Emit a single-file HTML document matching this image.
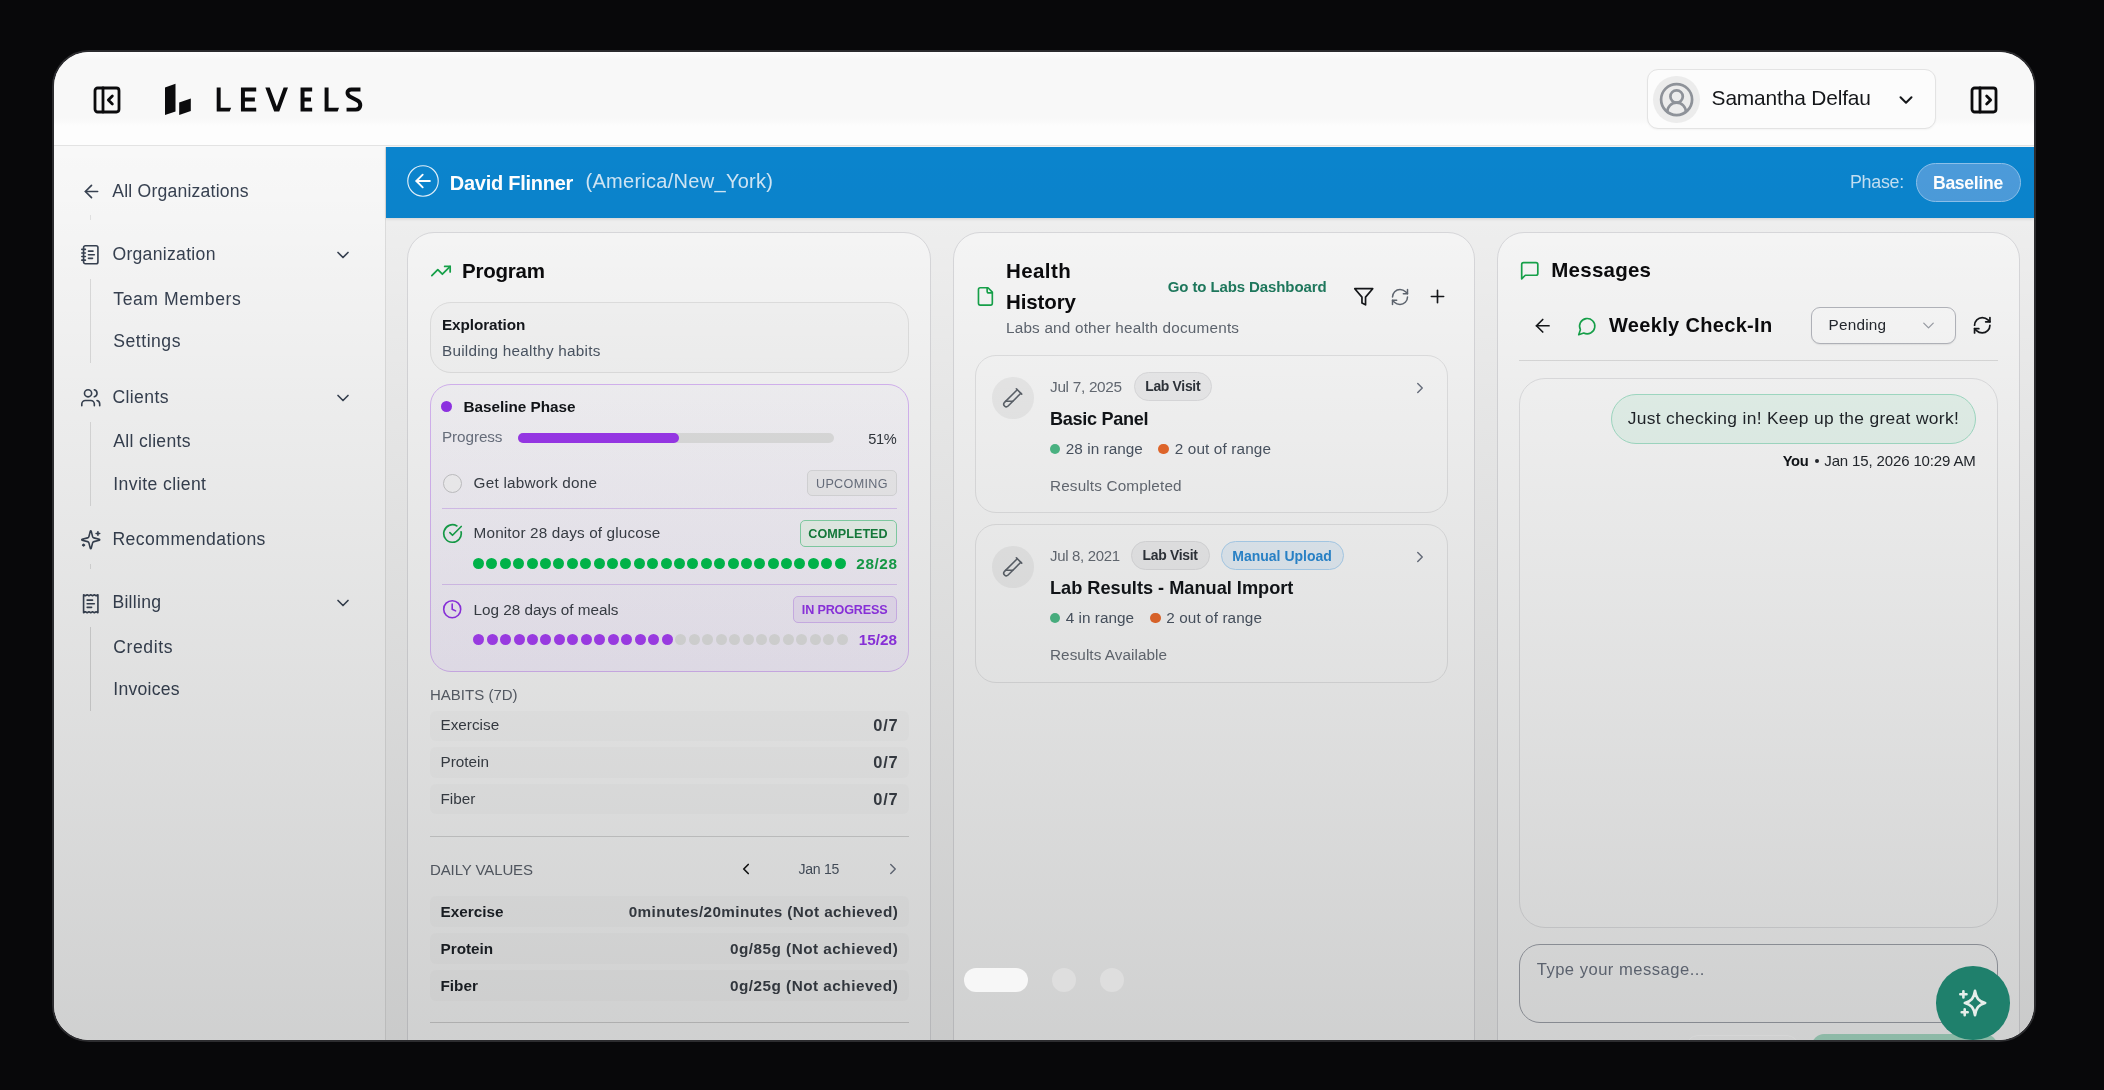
<!DOCTYPE html>
<html><head><meta charset="utf-8"><title>Levels</title>
<style>
html,body{margin:0;padding:0;}
body{width:2104px;height:1090px;overflow:hidden;background:#08080a;font-family:"Liberation Sans",sans-serif;position:relative;}
#win{position:absolute;left:52px;top:50px;width:1980px;height:988px;border:2px solid #2c2c2f;border-radius:37px;overflow:hidden;background:#f8f8f8;}
#in{position:absolute;left:-54px;top:-52px;width:2104px;height:1090px;will-change:transform;}
#in div,#in span,#in svg,#in i{position:absolute;box-sizing:border-box;}
#in i{width:11px;height:11px;border-radius:50%;display:block;}
#ov{left:54px;top:147px;width:1980px;height:893px;background:linear-gradient(rgba(0,0,0,0),rgba(4,8,8,0.165));pointer-events:none;}
</style></head><body>
<div id="win"><div id="in">
<div style="left:54px;top:52px;width:1980px;height:94px;background:linear-gradient(#ffffff 0px,#f8f8f8 8px,#f8f8f8 66px,#fdfdfd 74px,#fdfdfd 100%);border-bottom:1px solid #e3e3e3;"></div>
<svg style="left:90.7px;top:83.6px;" width="32" height="32" viewBox="0 0 24 24" fill="none" stroke="#0b0b0d" stroke-width="2.1" stroke-linecap="round" stroke-linejoin="round"><rect width="18" height="18" x="3" y="3" rx="2"/><path d="M9 3v18"/><path d="m16 15-3-3 3-3"/></svg>
<svg style="left:164px;top:83px" width="28" height="33" viewBox="0 0 28 33"><path d="M1 4.5 L11.5 0.8 L11.5 28.5 L1 32 Z" fill="#0b0b0d"/><path d="M15.2 19.5 L26.8 15.5 L26.8 28 L15.2 32 Z" fill="#0b0b0d"/></svg>
<svg style="left:155px;top:75px" width="220" height="50" viewBox="0 0 2104 478" fill="none" stroke="#0b0b0d" stroke-width="38" stroke-linejoin="miter"><path d="M590 120H628V312H728L714 350H590Z" fill="#0b0b0d" stroke="none"/><path d="M968 139H841V331H968M841 234H955"/><path d="M1055 120H1097L1165 300L1230 120H1272L1188 350H1140Z" fill="#0b0b0d" stroke="none"/><path d="M1503 139H1411V331H1503M1411 234H1492"/><path d="M1622 120H1660V312H1760L1746 350H1622Z" fill="#0b0b0d" stroke="none"/><path d="M1965 139H1878Q1840 139 1841 172Q1842 198 1876 213L1936 243Q1966 259 1963 293Q1959 331 1920 331H1832" stroke-linejoin="round"/></svg>
<div style="left:1647px;top:68.8px;width:289px;height:60.4px;background:#fcfcfc;border:1px solid #e3e3e3;border-radius:11px;box-shadow:0 1px 2px rgba(0,0,0,.04);"></div>
<div style="left:1653.3px;top:76px;width:46.8px;height:46.8px;background:#ececec;border-radius:50%;"></div>
<svg style="left:1658.1px;top:80.8px;" width="37.2" height="37.2" viewBox="0 0 24 24" fill="none" stroke="#8e9299" stroke-width="1.75" stroke-linecap="round" stroke-linejoin="round"><path d="M18 20a6 6 0 0 0-12 0"/><circle cx="12" cy="10" r="4"/><circle cx="12" cy="12" r="10"/></svg>
<span style="top:85.16px;font-size:20.90px;line-height:26px;color:#15171a;font-weight:400;white-space:nowrap;letter-spacing:-0.150px;left:1711.60px;">Samantha Delfau</span>
<svg style="left:1894.9px;top:88.6px;" width="22" height="22" viewBox="0 0 24 24" fill="none" stroke="#15171a" stroke-width="2.2" stroke-linecap="round" stroke-linejoin="round"><path d="m6 9 6 6 6-6"/></svg>
<svg style="left:1967.8px;top:84px;" width="32" height="32" viewBox="0 0 24 24" fill="none" stroke="#0b0b0d" stroke-width="2.1" stroke-linecap="round" stroke-linejoin="round"><rect width="18" height="18" x="3" y="3" rx="2"/><path d="M9 3v18"/><path d="m14 9 3 3-3 3"/></svg>
<div style="left:54px;top:147px;width:332px;height:893px;background:#f8f8f8;border-right:1px solid #dedede;"></div>
<svg style="left:80.7px;top:181.2px;" width="21" height="21" viewBox="0 0 24 24" fill="none" stroke="#374151" stroke-width="1.9" stroke-linecap="round" stroke-linejoin="round"><path d="m12 19-7-7 7-7"/><path d="M19 12H5"/></svg>
<span style="top:179.70px;font-size:17.60px;line-height:22px;color:#374151;font-weight:400;white-space:nowrap;letter-spacing:0.216px;left:112.20px;">All Organizations</span>
<div style="left:90px;top:215px;width:1px;height:5px;background:#e2e2e2;"></div>
<svg style="left:80.05px;top:244.45px;" width="21.5" height="21.5" viewBox="0 0 24 24" fill="none" stroke="#374151" stroke-width="1.8" stroke-linecap="round" stroke-linejoin="round"><path d="M2 6h4"/><path d="M2 10h4"/><path d="M2 14h4"/><path d="M2 18h4"/><rect width="16" height="20" x="4" y="2" rx="2"/><path d="M9.5 8h5"/><path d="M9.5 12H16"/><path d="M9.5 16H14"/></svg>
<span style="top:242.90px;font-size:17.60px;line-height:22px;color:#374151;font-weight:400;white-space:nowrap;letter-spacing:0.300px;left:112.40px;">Organization</span>
<svg style="left:333px;top:244.8px;" width="20" height="20" viewBox="0 0 24 24" fill="none" stroke="#374151" stroke-width="2" stroke-linecap="round" stroke-linejoin="round"><path d="m6 9 6 6 6-6"/></svg>
<div style="left:90px;top:279px;width:1px;height:84px;background:#dcdcdc;"></div>
<span style="top:287.90px;font-size:17.60px;line-height:22px;color:#374151;font-weight:400;white-space:nowrap;letter-spacing:0.565px;left:113.30px;">Team Members</span>
<span style="top:329.90px;font-size:17.60px;line-height:22px;color:#374151;font-weight:400;white-space:nowrap;letter-spacing:0.514px;left:113.30px;">Settings</span>
<svg style="left:80.25px;top:386.75px;" width="21.5" height="21.5" viewBox="0 0 24 24" fill="none" stroke="#374151" stroke-width="1.8" stroke-linecap="round" stroke-linejoin="round"><path d="M16 21v-2a4 4 0 0 0-4-4H6a4 4 0 0 0-4 4v2"/><circle cx="9" cy="7" r="4"/><path d="M22 21v-2a4 4 0 0 0-3-3.87"/><path d="M16 3.13a4 4 0 0 1 0 7.75"/></svg>
<span style="top:385.50px;font-size:17.60px;line-height:22px;color:#374151;font-weight:400;white-space:nowrap;letter-spacing:0.384px;left:112.40px;">Clients</span>
<svg style="left:333px;top:387.5px;" width="20" height="20" viewBox="0 0 24 24" fill="none" stroke="#374151" stroke-width="2" stroke-linecap="round" stroke-linejoin="round"><path d="m6 9 6 6 6-6"/></svg>
<div style="left:90px;top:421.5px;width:1px;height:84px;background:#dcdcdc;"></div>
<span style="top:430.40px;font-size:17.60px;line-height:22px;color:#374151;font-weight:400;white-space:nowrap;letter-spacing:0.286px;left:113.30px;">All clients</span>
<span style="top:472.50px;font-size:17.60px;line-height:22px;color:#374151;font-weight:400;white-space:nowrap;letter-spacing:0.387px;left:113.30px;">Invite client</span>
<svg style="left:80.25px;top:529.25px;" width="21.5" height="21.5" viewBox="0 0 24 24" fill="none" stroke="#374151" stroke-width="1.8" stroke-linecap="round" stroke-linejoin="round"><path d="M9.937 15.5A2 2 0 0 0 8.5 14.063l-6.135-1.582a.5.5 0 0 1 0-.962L8.5 9.936A2 2 0 0 0 9.937 8.5l1.582-6.135a.5.5 0 0 1 .963 0L14.063 8.5A2 2 0 0 0 15.5 9.937l6.135 1.581a.5.5 0 0 1 0 .964L15.5 14.063a2 2 0 0 0-1.437 1.437l-1.582 6.135a.5.5 0 0 1-.963 0z"/><path d="M20 3v4"/><path d="M22 5h-4"/><path d="M4 17v2"/><path d="M5 18H3"/></svg>
<span style="top:527.90px;font-size:17.60px;line-height:22px;color:#374151;font-weight:400;white-space:nowrap;letter-spacing:0.453px;left:112.40px;">Recommendations</span>
<div style="left:90px;top:564px;width:1px;height:5px;background:#dcdcdc;"></div>
<svg style="left:80.25px;top:592.75px;" width="21.5" height="21.5" viewBox="0 0 24 24" fill="none" stroke="#374151" stroke-width="1.8" stroke-linecap="round" stroke-linejoin="round"><path d="M4 2v20l2-1 2 1 2-1 2 1 2-1 2 1 2-1 2 1V2l-2 1-2-1-2 1-2-1-2 1-2-1-2 1Z"/><path d="M14 8H8"/><path d="M16 12H8"/><path d="M13 16H8"/></svg>
<span style="top:591.40px;font-size:17.60px;line-height:22px;color:#374151;font-weight:400;white-space:nowrap;letter-spacing:0.274px;left:112.40px;">Billing</span>
<svg style="left:333px;top:593px;" width="20" height="20" viewBox="0 0 24 24" fill="none" stroke="#374151" stroke-width="2" stroke-linecap="round" stroke-linejoin="round"><path d="m6 9 6 6 6-6"/></svg>
<div style="left:90px;top:627px;width:1px;height:84px;background:#d6d6d6;"></div>
<span style="top:635.90px;font-size:17.60px;line-height:22px;color:#374151;font-weight:400;white-space:nowrap;letter-spacing:0.575px;left:113.30px;">Credits</span>
<span style="top:678.10px;font-size:17.60px;line-height:22px;color:#374151;font-weight:400;white-space:nowrap;letter-spacing:0.233px;left:113.30px;">Invoices</span>
<div style="left:386px;top:147px;width:1648px;height:893px;background:#f1f1f1;"></div>
<div style="left:386px;top:147px;width:1648px;height:71px;background:#0b84cd;box-shadow:0 1px 3px rgba(0,0,0,.12);"></div>
<svg style="left:404.9px;top:162.8px;" width="36" height="36" viewBox="0 0 24 24" fill="none" stroke="#ffffff" stroke-width="1.25" stroke-linecap="round" stroke-linejoin="round"><circle cx="12" cy="12" r="10.15" stroke-width=".75" stroke="#e4f1fa"/><path d="M16.6 12H7.6"/><path d="m11.8 7.8-4.2 4.2 4.2 4.2"/></svg>
<span style="top:171.07px;font-size:20.00px;line-height:25px;color:#ffffff;font-weight:700;white-space:nowrap;letter-spacing:-0.260px;left:449.80px;">David Flinner</span>
<span style="top:169.07px;font-size:20.00px;line-height:25px;color:#cfe5f4;font-weight:400;white-space:nowrap;letter-spacing:0.284px;left:585.50px;">(America/New_York)</span>
<span style="top:171.20px;font-size:17.89px;line-height:22px;color:#c3dff2;font-weight:400;white-space:nowrap;letter-spacing:-0.300px;left:1850.00px;">Phase:</span>
<div style="left:1915.5px;top:163px;width:105px;height:39px;background:#4c9bda;border:1px solid #8cc0ea;border-radius:20px;"></div>
<span style="top:171.91px;font-size:17.58px;line-height:22px;color:#ffffff;font-weight:700;white-space:nowrap;letter-spacing:-0.301px;left:1933.00px;">Baseline</span>
<div style="left:407.3px;top:231.8px;width:523.3px;height:848.2px;background:#f8f8f8;border:1px solid #d9d9dc;border-radius:27px;"></div>
<svg style="left:429.6px;top:259.7px;" width="22" height="22" viewBox="0 0 24 24" fill="none" stroke="#16a34a" stroke-width="1.9" stroke-linecap="round" stroke-linejoin="round"><polyline points="22 7 13.5 15.5 8.5 10.5 2 17"/><polyline points="16 7 22 7 22 13"/></svg>
<span style="top:257.80px;font-size:20.50px;line-height:26px;color:#0b0b0d;font-weight:700;white-space:nowrap;letter-spacing:-0.217px;left:462.00px;">Program</span>
<div style="left:430px;top:302px;width:479px;height:71px;background:#f5f5f5;border:1px solid #e1e1e1;border-radius:21px;"></div>
<span style="top:315.40px;font-size:15.30px;line-height:19px;color:#14171c;font-weight:700;white-space:nowrap;letter-spacing:-0.086px;left:442.00px;">Exploration</span>
<span style="top:340.70px;font-size:15.30px;line-height:19px;color:#4b5563;font-weight:400;white-space:nowrap;letter-spacing:0.237px;left:442.00px;">Building healthy habits</span>
<div style="left:430px;top:384px;width:479px;height:287.5px;background:linear-gradient(#f6f5f8,#f4effb);border:1px solid #d8b6f5;border-radius:21px;"></div>
<div style="left:441.3px;top:401.3px;width:11px;height:11px;background:#9333ea;border-radius:50%;"></div>
<span style="top:397.20px;font-size:15.30px;line-height:19px;color:#111418;font-weight:700;white-space:nowrap;letter-spacing:-0.012px;left:463.40px;">Baseline Phase</span>
<span style="top:427.00px;font-size:15.30px;line-height:19px;color:#6b7280;font-weight:400;white-space:nowrap;letter-spacing:-0.103px;left:442.00px;">Progress</span>
<div style="left:518px;top:433px;width:316px;height:10px;background:#e0e0e0;border-radius:5px;"></div>
<div style="left:518px;top:433px;width:161px;height:10px;background:#9c38ee;border-radius:5px;"></div>
<span style="top:429.64px;font-size:14.60px;line-height:18px;color:#30353c;font-weight:400;white-space:nowrap;letter-spacing:-0.400px;right:1207.70px;">51%</span>
<div style="left:443.3px;top:474.1px;width:19.2px;height:19.2px;border:1.8px solid #c6c6c8;border-radius:50%;box-sizing:border-box;background:#f6f5f7;"></div>
<span style="top:473.00px;font-size:15.30px;line-height:19px;color:#3a3f47;font-weight:400;white-space:nowrap;letter-spacing:0.232px;left:473.60px;">Get labwork done</span>
<div style="left:807px;top:470px;width:90.2px;height:26.3px;background:#efeef0;border:1.5px solid #dcdcde;border-radius:5px;"></div>
<span style="top:475.63px;font-size:12.60px;line-height:16px;color:#6b7280;font-weight:400;white-space:nowrap;letter-spacing:0.314px;left:816.00px;">UPCOMING</span>
<div style="left:442px;top:508px;width:455px;height:1px;background:#dcc4f3;"></div>
<svg style="left:441.8px;top:522.5px;" width="21" height="21" viewBox="0 0 24 24" fill="none" stroke="#16a34a" stroke-width="1.9" stroke-linecap="round" stroke-linejoin="round"><path d="M21.801 10A10 10 0 1 1 17 3.335"/><path d="m9 11 3 3L22 4"/></svg>
<span style="top:522.90px;font-size:15.30px;line-height:19px;color:#3a3f47;font-weight:400;white-space:nowrap;letter-spacing:0.154px;left:473.60px;">Monitor 28 days of glucose</span>
<div style="left:799.5px;top:520px;width:97.7px;height:26.8px;background:#edf5ef;border:1.5px solid #86d6aa;border-radius:5px;"></div>
<span style="top:525.63px;font-size:12.60px;line-height:16px;color:#15803d;font-weight:700;white-space:nowrap;letter-spacing:0.037px;left:808.30px;">COMPLETED</span>
<i style="left:473.10px;top:557.90px;background:#00c04e"></i><i style="left:486.49px;top:557.90px;background:#00c04e"></i><i style="left:499.88px;top:557.90px;background:#00c04e"></i><i style="left:513.27px;top:557.90px;background:#00c04e"></i><i style="left:526.66px;top:557.90px;background:#00c04e"></i><i style="left:540.05px;top:557.90px;background:#00c04e"></i><i style="left:553.44px;top:557.90px;background:#00c04e"></i><i style="left:566.83px;top:557.90px;background:#00c04e"></i><i style="left:580.22px;top:557.90px;background:#00c04e"></i><i style="left:593.61px;top:557.90px;background:#00c04e"></i><i style="left:607.00px;top:557.90px;background:#00c04e"></i><i style="left:620.39px;top:557.90px;background:#00c04e"></i><i style="left:633.78px;top:557.90px;background:#00c04e"></i><i style="left:647.17px;top:557.90px;background:#00c04e"></i><i style="left:660.56px;top:557.90px;background:#00c04e"></i><i style="left:673.95px;top:557.90px;background:#00c04e"></i><i style="left:687.34px;top:557.90px;background:#00c04e"></i><i style="left:700.73px;top:557.90px;background:#00c04e"></i><i style="left:714.12px;top:557.90px;background:#00c04e"></i><i style="left:727.51px;top:557.90px;background:#00c04e"></i><i style="left:740.90px;top:557.90px;background:#00c04e"></i><i style="left:754.29px;top:557.90px;background:#00c04e"></i><i style="left:767.68px;top:557.90px;background:#00c04e"></i><i style="left:781.07px;top:557.90px;background:#00c04e"></i><i style="left:794.46px;top:557.90px;background:#00c04e"></i><i style="left:807.85px;top:557.90px;background:#00c04e"></i><i style="left:821.24px;top:557.90px;background:#00c04e"></i><i style="left:834.63px;top:557.90px;background:#00c04e"></i>
<span style="top:554.10px;font-size:15.30px;line-height:19px;color:#16a34a;font-weight:700;white-space:nowrap;letter-spacing:0.604px;right:1206.40px;">28/28</span>
<div style="left:442px;top:584.3px;width:455px;height:1px;background:#dcc4f3;"></div>
<svg style="left:442.1px;top:599.4px;" width="20.4" height="20.4" viewBox="0 0 24 24" fill="none" stroke="#9333ea" stroke-width="1.9" stroke-linecap="round" stroke-linejoin="round"><circle cx="12" cy="12" r="10"/><polyline points="12 6 12 12 16 14"/></svg>
<span style="top:599.50px;font-size:15.30px;line-height:19px;color:#3a3f47;font-weight:400;white-space:nowrap;letter-spacing:-0.028px;left:473.60px;">Log 28 days of meals</span>
<div style="left:792.8px;top:596.4px;width:104.4px;height:27px;background:#ede3f7;border:1.5px solid #d6b8f3;border-radius:5px;"></div>
<span style="top:602.23px;font-size:12.60px;line-height:16px;color:#9333ea;font-weight:700;white-space:nowrap;letter-spacing:-0.161px;left:801.80px;">IN PROGRESS</span>
<i style="left:473.10px;top:634.20px;background:#a73ff5"></i><i style="left:486.57px;top:634.20px;background:#a73ff5"></i><i style="left:500.04px;top:634.20px;background:#a73ff5"></i><i style="left:513.51px;top:634.20px;background:#a73ff5"></i><i style="left:526.98px;top:634.20px;background:#a73ff5"></i><i style="left:540.45px;top:634.20px;background:#a73ff5"></i><i style="left:553.92px;top:634.20px;background:#a73ff5"></i><i style="left:567.39px;top:634.20px;background:#a73ff5"></i><i style="left:580.86px;top:634.20px;background:#a73ff5"></i><i style="left:594.33px;top:634.20px;background:#a73ff5"></i><i style="left:607.80px;top:634.20px;background:#a73ff5"></i><i style="left:621.27px;top:634.20px;background:#a73ff5"></i><i style="left:634.74px;top:634.20px;background:#a73ff5"></i><i style="left:648.21px;top:634.20px;background:#a73ff5"></i><i style="left:661.68px;top:634.20px;background:#a73ff5"></i><i style="left:675.15px;top:634.20px;background:#e0e0e0"></i><i style="left:688.62px;top:634.20px;background:#e0e0e0"></i><i style="left:702.09px;top:634.20px;background:#e0e0e0"></i><i style="left:715.56px;top:634.20px;background:#e0e0e0"></i><i style="left:729.03px;top:634.20px;background:#e0e0e0"></i><i style="left:742.50px;top:634.20px;background:#e0e0e0"></i><i style="left:755.97px;top:634.20px;background:#e0e0e0"></i><i style="left:769.44px;top:634.20px;background:#e0e0e0"></i><i style="left:782.91px;top:634.20px;background:#e0e0e0"></i><i style="left:796.38px;top:634.20px;background:#e0e0e0"></i><i style="left:809.85px;top:634.20px;background:#e0e0e0"></i><i style="left:823.32px;top:634.20px;background:#e0e0e0"></i><i style="left:836.79px;top:634.20px;background:#e0e0e0"></i>
<span style="top:630.20px;font-size:15.30px;line-height:19px;color:#9333ea;font-weight:700;white-space:nowrap;letter-spacing:0.004px;right:1207.00px;">15/28</span>
<span style="top:685.00px;font-size:15.00px;line-height:19px;color:#5b616b;font-weight:400;white-space:nowrap;letter-spacing:0.009px;left:430.00px;">HABITS (7D)</span>
<div style="left:430px;top:710.7px;width:479px;height:30.5px;background:#f4f4f4;border-radius:6px;"></div>
<span style="top:715.20px;font-size:15.30px;line-height:19px;color:#3a3f47;font-weight:400;white-space:nowrap;left:440.50px;">Exercise</span>
<span style="top:714.99px;font-size:16.47px;line-height:21px;color:#3a3f47;font-weight:700;white-space:nowrap;letter-spacing:0.750px;right:1205.55px;">0/7</span>
<div style="left:430px;top:747.3px;width:479px;height:30.5px;background:#f4f4f4;border-radius:6px;"></div>
<span style="top:752.40px;font-size:15.30px;line-height:19px;color:#3a3f47;font-weight:400;white-space:nowrap;left:440.50px;">Protein</span>
<span style="top:752.19px;font-size:16.47px;line-height:21px;color:#3a3f47;font-weight:700;white-space:nowrap;letter-spacing:0.750px;right:1205.55px;">0/7</span>
<div style="left:430px;top:783.9px;width:479px;height:30.5px;background:#f4f4f4;border-radius:6px;"></div>
<span style="top:789.20px;font-size:15.30px;line-height:19px;color:#3a3f47;font-weight:400;white-space:nowrap;left:440.50px;">Fiber</span>
<span style="top:788.99px;font-size:16.47px;line-height:21px;color:#3a3f47;font-weight:700;white-space:nowrap;letter-spacing:0.750px;right:1205.55px;">0/7</span>
<div style="left:430px;top:836px;width:479px;height:1px;background:#d4d4d4;"></div>
<span style="top:860.10px;font-size:15.00px;line-height:19px;color:#5b616b;font-weight:400;white-space:nowrap;letter-spacing:-0.110px;left:430.00px;">DAILY VALUES</span>
<svg style="left:736.8px;top:860px;" width="18" height="18" viewBox="0 0 24 24" fill="none" stroke="#111" stroke-width="2.2" stroke-linecap="round" stroke-linejoin="round"><path d="m15 18-6-6 6-6"/></svg>
<span style="top:860.12px;font-size:14.09px;line-height:18px;color:#4b5563;font-weight:400;white-space:nowrap;letter-spacing:-0.300px;left:798.60px;">Jan 15</span>
<svg style="left:883.8px;top:860px;" width="18" height="18" viewBox="0 0 24 24" fill="none" stroke="#6b7280" stroke-width="1.9" stroke-linecap="round" stroke-linejoin="round"><path d="m9 18 6-6-6-6"/></svg>
<div style="left:430px;top:896px;width:479px;height:31px;background:#f4f4f4;border-radius:6px;"></div>
<span style="top:901.90px;font-size:15.30px;line-height:19px;color:#1c2026;font-weight:700;white-space:nowrap;left:440.50px;">Exercise</span>
<span style="top:901.90px;font-size:15.30px;line-height:19px;color:#3a3f47;font-weight:700;white-space:nowrap;letter-spacing:0.388px;right:1205.81px;">0minutes/20minutes (Not achieved)</span>
<div style="left:430px;top:933.1px;width:479px;height:31px;background:#f4f4f4;border-radius:6px;"></div>
<span style="top:939.20px;font-size:15.30px;line-height:19px;color:#1c2026;font-weight:700;white-space:nowrap;left:440.50px;">Protein</span>
<span style="top:939.20px;font-size:15.30px;line-height:19px;color:#3a3f47;font-weight:700;white-space:nowrap;letter-spacing:0.483px;right:1205.72px;">0g/85g (Not achieved)</span>
<div style="left:430px;top:970.2px;width:479px;height:31px;background:#f4f4f4;border-radius:6px;"></div>
<span style="top:976.20px;font-size:15.30px;line-height:19px;color:#1c2026;font-weight:700;white-space:nowrap;left:440.50px;">Fiber</span>
<span style="top:976.20px;font-size:15.30px;line-height:19px;color:#3a3f47;font-weight:700;white-space:nowrap;letter-spacing:0.483px;right:1205.72px;">0g/25g (Not achieved)</span>
<div style="left:430px;top:1022.3px;width:479px;height:1px;background:#cfcfcf;"></div>
<div style="left:952.8px;top:231.8px;width:522.6px;height:848.2px;background:#f8f8f8;border:1px solid #d9d9dc;border-radius:27px;"></div>
<svg style="left:974.8px;top:286.4px;" width="20.8" height="20.8" viewBox="0 0 24 24" fill="none" stroke="#16a34a" stroke-width="1.9" stroke-linecap="round" stroke-linejoin="round"><path d="M15 2H6a2 2 0 0 0-2 2v16a2 2 0 0 0 2 2h12a2 2 0 0 0 2-2V7Z"/><path d="M14 2v4a2 2 0 0 0 2 2h4"/></svg>
<span style="top:257.70px;font-size:20.50px;line-height:26px;color:#0b0b0d;font-weight:700;white-space:nowrap;letter-spacing:0.409px;left:1006.00px;">Health</span>
<span style="top:289.30px;font-size:20.50px;line-height:26px;color:#0b0b0d;font-weight:700;white-space:nowrap;letter-spacing:-0.105px;left:1006.00px;">History</span>
<span style="top:318.00px;font-size:15.30px;line-height:19px;color:#5f6670;font-weight:400;white-space:nowrap;letter-spacing:0.197px;left:1006.00px;">Labs and other health documents</span>
<span style="top:277.30px;font-size:15.00px;line-height:19px;color:#1f7a5e;font-weight:700;white-space:nowrap;letter-spacing:-0.109px;left:1167.80px;">Go to Labs Dashboard</span>
<svg style="left:1352.95px;top:286.05px;" width="21.5" height="21.5" viewBox="0 0 24 24" fill="none" stroke="#15171a" stroke-width="1.9" stroke-linecap="round" stroke-linejoin="round"><polygon points="22 3 2 3 10 12.46 10 19 14 21 14 12.46 22 3"/></svg>
<svg style="left:1390.4px;top:286.6px;" width="20" height="20" viewBox="0 0 24 24" fill="none" stroke="#5f6670" stroke-width="1.8" stroke-linecap="round" stroke-linejoin="round"><path d="M3 12a9 9 0 0 1 9-9 9.75 9.75 0 0 1 6.74 2.74L21 8"/><path d="M21 3v5h-5"/><path d="M21 12a9 9 0 0 1-9 9 9.75 9.75 0 0 1-6.74-2.74L3 16"/><path d="M8 16H3v5"/></svg>
<svg style="left:1426.7px;top:286.1px;" width="21" height="21" viewBox="0 0 24 24" fill="none" stroke="#15171a" stroke-width="1.9" stroke-linecap="round" stroke-linejoin="round"><path d="M5 12h14"/><path d="M12 5v14"/></svg>
<div style="left:975.2px;top:355px;width:472.5px;height:158px;background:#f9f9f9;border:1px solid #e2e2e3;border-radius:21px;"></div>
<div style="left:992.2px;top:377.3px;width:41.4px;height:41.4px;background:#ececec;border-radius:50%;"></div>
<svg style="left:1002.45px;top:387.05px;" width="21.5" height="21.5" viewBox="0 0 24 24" fill="none" stroke="#5d636b" stroke-width="1.75" stroke-linecap="round" stroke-linejoin="round"><path d="M21 7 6.82 21.18a2.83 2.83 0 0 1-3.99-.01a2.83 2.83 0 0 1 0-4L17 3"/><path d="m16 2 6 6"/><path d="M12 16H4"/></svg>
<span style="top:376.97px;font-size:15.37px;line-height:19px;color:#666c75;font-weight:400;white-space:nowrap;letter-spacing:-0.300px;left:1050.00px;">Jul 7, 2025</span>
<div style="left:1134px;top:372px;width:78.4px;height:28.6px;background:#ededee;border:1px solid #dedee0;border-radius:15px;"></div>
<span style="top:378.47px;font-size:13.93px;line-height:17px;color:#2f343b;font-weight:700;white-space:nowrap;letter-spacing:-0.300px;left:1145.20px;">Lab Visit</span>
<svg style="left:1411.2px;top:378.6px;" width="18" height="18" viewBox="0 0 24 24" fill="none" stroke="#6b7280" stroke-width="1.9" stroke-linecap="round" stroke-linejoin="round"><path d="m9 18 6-6-6-6"/></svg>
<span style="top:408.43px;font-size:18.10px;line-height:23px;color:#111418;font-weight:700;white-space:nowrap;letter-spacing:-0.301px;left:1050.00px;">Basic Panel</span>
<div style="left:1049.8px;top:443.5px;width:10.6px;height:10.6px;background:#4dbb88;border-radius:50%;"></div>
<span style="top:438.90px;font-size:15.30px;line-height:19px;color:#4b5563;font-weight:400;white-space:nowrap;letter-spacing:0.045px;left:1065.80px;">28 in range</span>
<div style="left:1158.4px;top:443.5px;width:10.6px;height:10.6px;background:#ea6a2c;border-radius:50%;"></div>
<span style="top:438.90px;font-size:15.30px;line-height:19px;color:#4b5563;font-weight:400;white-space:nowrap;letter-spacing:0.144px;left:1174.70px;">2 out of range</span>
<span style="top:475.90px;font-size:15.30px;line-height:19px;color:#666c75;font-weight:400;white-space:nowrap;letter-spacing:0.147px;left:1050.00px;">Results Completed</span>
<div style="left:975.2px;top:524px;width:472.5px;height:159px;background:#f9f9f9;border:1px solid #e2e2e3;border-radius:21px;"></div>
<div style="left:992.2px;top:546.3px;width:41.4px;height:41.4px;background:#ececec;border-radius:50%;"></div>
<svg style="left:1002.45px;top:556.05px;" width="21.5" height="21.5" viewBox="0 0 24 24" fill="none" stroke="#5d636b" stroke-width="1.75" stroke-linecap="round" stroke-linejoin="round"><path d="M21 7 6.82 21.18a2.83 2.83 0 0 1-3.99-.01a2.83 2.83 0 0 1 0-4L17 3"/><path d="m16 2 6 6"/><path d="M12 16H4"/></svg>
<span style="top:546.12px;font-size:14.96px;line-height:19px;color:#666c75;font-weight:400;white-space:nowrap;letter-spacing:-0.301px;left:1050.00px;">Jul 8, 2021</span>
<div style="left:1131.3px;top:541px;width:78.4px;height:28.6px;background:#ededee;border:1px solid #dedee0;border-radius:15px;"></div>
<span style="top:547.47px;font-size:13.93px;line-height:17px;color:#2f343b;font-weight:700;white-space:nowrap;letter-spacing:-0.300px;left:1142.50px;">Lab Visit</span>
<div style="left:1220.7px;top:541px;width:123px;height:28.6px;background:#e6eff7;border:1px solid #aed4f2;border-radius:15px;"></div>
<span style="top:546.95px;font-size:14.00px;line-height:18px;color:#2b8ad4;font-weight:700;white-space:nowrap;letter-spacing:-0.005px;left:1232.30px;">Manual Upload</span>
<svg style="left:1411.2px;top:547.6px;" width="18" height="18" viewBox="0 0 24 24" fill="none" stroke="#6b7280" stroke-width="1.9" stroke-linecap="round" stroke-linejoin="round"><path d="m9 18 6-6-6-6"/></svg>
<span style="top:577.39px;font-size:18.20px;line-height:23px;color:#111418;font-weight:700;white-space:nowrap;letter-spacing:-0.004px;left:1050.00px;">Lab Results - Manual Import</span>
<div style="left:1049.8px;top:612.5px;width:10.6px;height:10.6px;background:#4dbb88;border-radius:50%;"></div>
<span style="top:607.90px;font-size:15.30px;line-height:19px;color:#4b5563;font-weight:400;white-space:nowrap;letter-spacing:0.017px;left:1065.80px;">4 in range</span>
<div style="left:1150.2px;top:612.5px;width:10.6px;height:10.6px;background:#ea6a2c;border-radius:50%;"></div>
<span style="top:607.90px;font-size:15.30px;line-height:19px;color:#4b5563;font-weight:400;white-space:nowrap;letter-spacing:0.106px;left:1166.20px;">2 out of range</span>
<span style="top:644.90px;font-size:15.30px;line-height:19px;color:#666c75;font-weight:400;white-space:nowrap;letter-spacing:0.048px;left:1050.00px;">Results Available</span>
<div style="left:1497px;top:231.8px;width:523.3px;height:848.2px;background:#f8f8f8;border:1px solid #d9d9dc;border-radius:27px;"></div>
<svg style="left:1518.85px;top:259.75px;" width="21.5" height="21.5" viewBox="0 0 24 24" fill="none" stroke="#16a34a" stroke-width="1.9" stroke-linecap="round" stroke-linejoin="round"><path d="M21 15a2 2 0 0 1-2 2H7l-4 4V5a2 2 0 0 1 2-2h14a2 2 0 0 1 2 2z"/></svg>
<span style="top:257.40px;font-size:20.50px;line-height:26px;color:#0b0b0d;font-weight:700;white-space:nowrap;letter-spacing:0.241px;left:1551.30px;">Messages</span>
<svg style="left:1532.05px;top:314.85px;" width="21.5" height="21.5" viewBox="0 0 24 24" fill="none" stroke="#15171a" stroke-width="1.9" stroke-linecap="round" stroke-linejoin="round"><path d="m12 19-7-7 7-7"/><path d="M19 12H5"/></svg>
<svg style="left:1577.3px;top:315.6px;" width="20.4" height="20.4" viewBox="0 0 24 24" fill="none" stroke="#16a34a" stroke-width="1.9" stroke-linecap="round" stroke-linejoin="round"><path d="M7.9 20A9 9 0 1 0 4 16.1L2 22Z"/></svg>
<span style="top:312.87px;font-size:20.00px;line-height:25px;color:#0b0b0d;font-weight:700;white-space:nowrap;letter-spacing:0.328px;left:1609.00px;">Weekly Check-In</span>
<div style="left:1811px;top:307px;width:145px;height:37px;background:#fafafa;border:1px solid #b4b6bd;border-radius:9px;box-shadow:0 1px 1.5px rgba(0,0,0,.08);"></div>
<span style="top:315.40px;font-size:15.30px;line-height:19px;color:#24282e;font-weight:400;white-space:nowrap;letter-spacing:0.226px;left:1828.50px;">Pending</span>
<svg style="left:1918.8px;top:316.3px;" width="19" height="19" viewBox="0 0 24 24" fill="none" stroke="#9a9ea6" stroke-width="1.6" stroke-linecap="round" stroke-linejoin="round"><path d="m6 9 6 6 6-6"/></svg>
<svg style="left:1972.35px;top:315.35px;" width="20.5" height="20.5" viewBox="0 0 24 24" fill="none" stroke="#15171a" stroke-width="2" stroke-linecap="round" stroke-linejoin="round"><path d="M3 12a9 9 0 0 1 9-9 9.75 9.75 0 0 1 6.74 2.74L21 8"/><path d="M21 3v5h-5"/><path d="M21 12a9 9 0 0 1-9 9 9.75 9.75 0 0 1-6.74-2.74L3 16"/><path d="M8 16H3v5"/></svg>
<div style="left:1519.2px;top:360px;width:479.1px;height:1px;background:#dcdcdc;"></div>
<div style="left:1519.2px;top:378px;width:479.1px;height:550px;background:#f9f9f9;border:1px solid #e0e0e2;border-radius:26px;"></div>
<div style="left:1611px;top:394.2px;width:364.8px;height:49.6px;background:#e7f5ee;border:1px solid #a3dfc7;border-radius:25px;"></div>
<span style="top:407.27px;font-size:17.40px;line-height:22px;color:#1f2328;font-weight:400;white-space:nowrap;letter-spacing:0.326px;left:1627.70px;">Just checking in! Keep up the great work!</span>
<span style="top:451.90px;font-size:14.71px;line-height:18px;color:#111418;font-weight:700;white-space:nowrap;letter-spacing:-0.302px;left:1782.70px;">You</span>
<div style="left:1814.6px;top:458.6px;width:4.2px;height:4.2px;background:#24282e;border-radius:50%;"></div>
<span style="top:451.30px;font-size:15.00px;line-height:19px;color:#24282e;font-weight:400;white-space:nowrap;letter-spacing:-0.140px;right:128.34px;">Jan 15, 2026 10:29 AM</span>
<div style="left:1519.2px;top:944px;width:479.1px;height:79px;background:#f7f7f7;border:1px solid #a0a3ab;border-radius:21px;"></div>
<span style="top:958.75px;font-size:16.60px;line-height:21px;color:#6b7280;font-weight:400;white-space:nowrap;letter-spacing:0.479px;left:1536.70px;">Type your message...</span>
<div style="left:1685.7px;top:1034.5px;width:113.3px;height:35.5px;background:#f8f8f8;border:1.5px solid #ffffff;border-radius:12px;"></div>
<div style="left:1812px;top:1033.6px;width:185px;height:36.4px;background:#a8dcc6;border-radius:12px;"></div>
<div id="ov"></div>
<div style="left:964px;top:968px;width:64.2px;height:24px;background:#f7f7f7;border-radius:12px;"></div>
<div style="left:1052px;top:968px;width:24px;height:24px;background:#dedede;border-radius:50%;"></div>
<div style="left:1100px;top:968px;width:24px;height:24px;background:#dedede;border-radius:50%;"></div>
<div style="left:1936.4px;top:966px;width:73.6px;height:73.6px;background:#1f806c;border-radius:50%;"></div>
<svg style="left:1955.4px;top:982.9px" width="40" height="40" viewBox="0 0 40 40" fill="none" stroke="#e6eeea" stroke-width="2.6" stroke-linecap="round" stroke-linejoin="round"><path d="M20.0 7.800000000000001C21.3 15.4 23.6 18.4 30.2 20.0C23.6 21.6 21.3 24.6 20.0 32.2C18.7 24.6 16.4 21.6 9.8 20.0C16.4 18.4 18.7 15.4 20.0 7.800000000000001Z"/><path d="M8.4 8.2v6.2M5.300000000000001 11.3h6.2"/><path d="M9.7 26.3v6M6.699999999999999 29.3h6"/></svg>
</div></div>
</body></html>
